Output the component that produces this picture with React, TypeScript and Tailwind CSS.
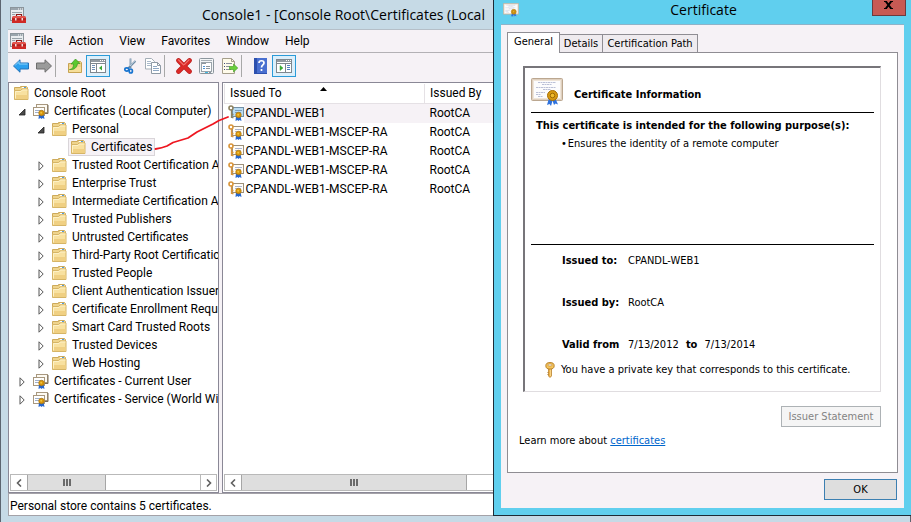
import type { ReactNode } from 'react';

type TreeNode = {
    label: string;
    level: number;
    icon: 'folder' | 'store';
    state?: 'open' | 'closed';
    selected?: boolean;
};

const treeNodes: TreeNode[] = [
    { label: 'Console Root', level: 0, icon: 'folder' },
    { label: 'Certificates (Local Computer)', level: 1, icon: 'store', state: 'open' },
    { label: 'Personal', level: 2, icon: 'folder', state: 'open' },
    { label: 'Certificates', level: 3, icon: 'folder', selected: true },
    { label: 'Trusted Root Certification A', level: 2, icon: 'folder', state: 'closed' },
    { label: 'Enterprise Trust', level: 2, icon: 'folder', state: 'closed' },
    { label: 'Intermediate Certification A', level: 2, icon: 'folder', state: 'closed' },
    { label: 'Trusted Publishers', level: 2, icon: 'folder', state: 'closed' },
    { label: 'Untrusted Certificates', level: 2, icon: 'folder', state: 'closed' },
    { label: 'Third-Party Root Certificatic', level: 2, icon: 'folder', state: 'closed' },
    { label: 'Trusted People', level: 2, icon: 'folder', state: 'closed' },
    { label: 'Client Authentication Issuer', level: 2, icon: 'folder', state: 'closed' },
    { label: 'Certificate Enrollment Requ', level: 2, icon: 'folder', state: 'closed' },
    { label: 'Smart Card Trusted Roots', level: 2, icon: 'folder', state: 'closed' },
    { label: 'Trusted Devices', level: 2, icon: 'folder', state: 'closed' },
    { label: 'Web Hosting', level: 2, icon: 'folder', state: 'closed' },
    { label: 'Certificates - Current User', level: 1, icon: 'store', state: 'closed' },
    { label: 'Certificates - Service (World Wi', level: 1, icon: 'store', state: 'closed' },
];

const certificates = [
    { to: 'CPANDL-WEB1', by: 'RootCA', selected: true },
    { to: 'CPANDL-WEB1-MSCEP-RA', by: 'RootCA', selected: false },
    { to: 'CPANDL-WEB1-MSCEP-RA', by: 'RootCA', selected: false },
    { to: 'CPANDL-WEB1-MSCEP-RA', by: 'RootCA', selected: false },
    { to: 'CPANDL-WEB1-MSCEP-RA', by: 'RootCA', selected: false },
];

const menus = ['File', 'Action', 'View', 'Favorites', 'Window', 'Help'];

const levelPadding = ['pl-[5px]', 'pl-[9px]', 'pl-[28px]', 'pl-[59px]'];

/* Icons */

function ConsoleIcon() {
    return (
        <svg width="16" height="16" viewBox="0 0 16 16" aria-hidden="true">
            <rect x="0.5" y="0.5" width="13" height="13" fill="#e9edf0" stroke="#8b959c" />
            <rect x="1" y="1" width="12" height="2" fill="#9aa5ad" />
            <path d="M8 2h1M10 2h1M12 2h1" stroke="#fff" />
            <path d="M2 5.5h10M2 7.5h3" stroke="#98a3aa" />
            <path d="M6.5 9V7.5h5V9" fill="none" stroke="#8c1a18" strokeWidth="1.2" />
            <path d="M3 9h12l1 2v5H2v-5z" fill="#cf2a26" />
            <path d="M3 9h12l1 2.5H2z" fill="#e4534c" />
            <path d="M2 12h14" stroke="#9c1614" />
            <path d="M5 11h1.5v2.500H5zM11.500 11H13v2.500h-1.500z" fill="#f3dada" />
        </svg>
    );
}

function FolderIcon() {
    return (
        <svg width="15" height="14" viewBox="0 0 15 14" className="shrink-0" aria-hidden="true">
            <path d="M0.500 1.500h6v-1h6l1 1v11.500h-13z" fill="#efd48c" stroke="#cdaa5b" />
            <rect x="8" y="1" width="4" height="1" fill="#fff" />
            <rect x="10" y="1" width="2" height="1" fill="#4f9be0" />
            <path d="M0.500 4.500h6l1.500-1.500h6v10.500H0.500z" fill="#f8e1a0" stroke="#d6b566" />
            <path d="M1 9h12.500v4H1z" fill="#f0d083" />
            <path d="M1.500 12.500V5.500h5.500l1.500-1.500h5" fill="none" stroke="#fdf1c6" />
        </svg>
    );
}

function Ribbon({ x, y }: { x: number; y: number }) {
    return (
        <g transform={`translate(${x} ${y})`}>
            <path d="M-2.500 1h2.500v5l-1-1-2 1zM0 1h2l1 5-2-1-1 1z" fill="#2566d0" />
            <circle r="2.800" fill="#d7950c" stroke="#a96f05" strokeWidth="0.500" />
            <circle cx="-0.300" cy="-0.300" r="1" fill="#f2c53e" />
        </g>
    );
}

function StoreIcon() {
    return (
        <svg width="16" height="16" viewBox="0 0 16 16" className="shrink-0" aria-hidden="true">
            <rect x="3.500" y="1.500" width="11" height="8" fill="#fdfaf2" stroke="#a8987f" />
            <path d="M15 2v8.500H4" fill="none" stroke="#7a6c58" />
            <rect x="0.500" y="4.500" width="11" height="8" fill="#fff" stroke="#a8987f" />
            <path d="M2 7.500h8M2 9.500h4" stroke="#9fb0cc" />
            <Ribbon x={8.5} y={10} />
        </svg>
    );
}

function KeyCertIcon({ active }: { active: boolean }) {
    return (
        <svg width="16" height="16" viewBox="0 0 16 16" className="block" aria-hidden="true">
            <rect x="4.500" y="2.500" width="11" height="9" fill={active ? '#b9dcf3' : '#fffdf8'} stroke={active ? '#728fa5' : '#9d9079'} />
            <path d="M7 5.500h7M7 7.500h6" stroke={active ? '#789cc0' : '#a9b4d2'} />
            <circle cx="3" cy="3" r="2" fill="#fff" stroke={active ? '#8d8260' : '#d9953a'} strokeWidth="1.600" />
            <path d="M3.500 5v8M4 9.500h1.500M4 12.500h1.500" fill="none" stroke={active ? '#8d8260' : '#d9953a'} strokeWidth="1.300" />
            <Ribbon x={10.5} y={10} />
        </svg>
    );
}

function CertificateIcon({ className }: { className: string }) {
    return (
        <svg viewBox="0 0 32 28" className={className} aria-hidden="true">
            <rect x="0.500" y="0.500" width="31" height="22" rx="1" fill="#dfd0bf" stroke="#bba790" />
            <rect x="2.500" y="2.500" width="27" height="18" fill="#fcfcfd" stroke="#efe5d9" />
            <path d="M7 4.500h18M11 6.500h10M5 9.500h20M12 11.500h8M5 14.500h9M5 16.500h5M7 18.500h5" stroke="#aab0cc" strokeDasharray="2 0.500" strokeWidth="0.800" />
            <path d="M18 20l-2 7 2.500-1 1.500 2 2-7zM21 21l2 6 1.500-1.500 2.500 1-3-7z" fill="#2e72de" />
            <circle cx="21.500" cy="17.500" r="5" fill="#d79a12" stroke="#a96f05" />
            <circle cx="21.500" cy="17.500" r="2.300" fill="#f0bc2d" stroke="#9c6907" />
        </svg>
    );
}

function KeyIcon() {
    return (
        <svg width="10" height="16" viewBox="0 0 10 16" className="shrink-0" aria-hidden="true">
            <path d="M3.500 6.500h3v7.500L5 15.500 3.500 14z" fill="#eeb24a" stroke="#b27a24" strokeWidth="0.700" />
            <path d="M5.500 7v7" stroke="#fbdc92" strokeWidth="0.800" />
            <path d="M3.500 10.500h-1M3.500 12.500h-1" stroke="#b27a24" />
            <ellipse cx="5" cy="3.800" rx="4.200" ry="3.300" fill="#f4c35a" stroke="#b27a24" strokeWidth="0.900" />
            <ellipse cx="5" cy="3" rx="2.200" ry="1" fill="#fff" stroke="#b27a24" strokeWidth="0.600" />
        </svg>
    );
}

function ArrowIcon({ forward = false }: { forward?: boolean }) {
    return (
        <svg width="16" height="14" viewBox="0 0 16 14" aria-hidden="true">
            {forward ? (
                <path d="M15.500 7L9 0.800V4H0.500v6H9v3.200z" fill="#9b9b9b" stroke="#6e6e6e" />
            ) : (
                <>
                    <path d="M0.500 7L7 0.800V4h8.500v6H7v3.200z" fill="#2ba0ef" stroke="#2171b8" />
                    <path d="M2 6.500L6 2.500V5h8.500" fill="none" stroke="#8dd2fb" />
                </>
            )}
        </svg>
    );
}

function UpFolderIcon() {
    return (
        <svg width="16" height="16" viewBox="0 0 16 16" aria-hidden="true">
            <path d="M1.500 5.500h6v-2h6l1 1v10h-13z" fill="#efd48c" stroke="#c7a352" />
            <path d="M2 9h12v5H2z" fill="#f6de9a" />
            <path d="M2.500 11.500c3.500-0.500 4-3 4-5.500H4l4.500-5L13 5.500h-2.500c-0.500 4-3 6.500-8 6z" fill="#5cc92e" stroke="#379620" strokeWidth="0.700" />
        </svg>
    );
}

function PaneIcon({ side }: { side: 'left' | 'right' }) {
    return (
        <svg width="16" height="14" viewBox="0 0 16 14" aria-hidden="true">
            <rect x="0.500" y="0.500" width="15" height="13" fill="#fff" stroke="#7f878e" />
            <rect x="1" y="1" width="14" height="2" fill="#929aa1" />
            <path d="M10 1.500h1M12 1.500h1M14 1.500h1" stroke="#fff" />
            <path d="M1 4.500h14" stroke="#7f878e" />
            {side === 'left' ? (
                <>
                    <path d="M6.500 5v8" stroke="#7f878e" />
                    <path d="M2 6.500h3M2 8.500h3M2 10.500h3" stroke="#6f8fb5" />
                    <path d="M12 6.500v5L9 9z" fill="#3aa935" />
                </>
            ) : (
                <>
                    <path d="M9.500 5v8" stroke="#7f878e" />
                    <path d="M11 6.500h3M11 8.500h3M11 10.500h3" stroke="#4f7fc0" />
                    <path d="M4 6.500v5L7 9z" fill="#3aa935" stroke="#3aa935" strokeWidth="0.500" />
                </>
            )}
        </svg>
    );
}

function CutIcon() {
    return (
        <svg width="14" height="16" viewBox="0 0 14 16" aria-hidden="true">
            <path d="M7.500 0.500L7.500 10M12.500 3L5 10.500" fill="none" stroke="#6e8ba5" strokeWidth="1.800" />
            <path d="M7.800 1v7M12 3L7 8" stroke="#d4e3ef" strokeWidth="0.600" />
            <ellipse cx="3.800" cy="11.500" rx="2" ry="1.600" fill="none" stroke="#1874cf" strokeWidth="1.700" />
            <ellipse cx="7.800" cy="13" rx="1.600" ry="2" fill="none" stroke="#1874cf" strokeWidth="1.700" />
        </svg>
    );
}

function CopyIcon() {
    return (
        <svg width="16" height="16" viewBox="0 0 16 16" aria-hidden="true">
            <path d="M0.500 0.500h6l3 3v7.500h-9z" fill="#fff" stroke="#a3adb6" />
            <path d="M2 3.500h4M2 5.500h4M2 7.500h4" stroke="#a9b9cb" />
            <path d="M6.500 4.500h6l3 3v8h-9z" fill="#fff" stroke="#8f9aa5" />
            <path d="M12.500 4.500v3h3" fill="none" stroke="#8f9aa5" />
            <path d="M8 8.500h4M8 10.500h6M8 12.500h6" stroke="#8fa8c4" />
        </svg>
    );
}

function DeleteIcon() {
    return (
        <svg width="16" height="16" viewBox="0 0 16 16" aria-hidden="true">
            <path d="M2.500 2.500l11 11M13.500 2.500l-11 11" stroke="#b81a18" strokeWidth="4.600" strokeLinecap="round" />
            <path d="M2.500 2.500l11 11M13.500 2.500l-11 11" stroke="#dc2a28" strokeWidth="3.400" strokeLinecap="round" />
            <path d="M2.500 1.800l5 5M13 1.800L8.500 6.300" stroke="#f27570" strokeWidth="1.200" strokeLinecap="round" />
        </svg>
    );
}

function PropertiesIcon() {
    return (
        <svg width="15" height="16" viewBox="0 0 15 16" aria-hidden="true">
            <rect x="0.500" y="0.500" width="14" height="15" rx="1" fill="#f3f5f6" stroke="#8d969d" />
            <path d="M2 2.500h11" stroke="#a8b0b6" />
            <rect x="2.500" y="4.500" width="10" height="9" fill="#fff" stroke="#9ba4ab" />
            <path d="M3 5.500h4" stroke="#8d969d" />
            <path d="M4 8.500h2M4 10.500h2" stroke="#4c94d6" />
            <path d="M7 8.500h4M7 10.500h4M10 14.500h2" stroke="#8d969d" />
            <path d="M6 14.500h3" stroke="#42b8e0" />
        </svg>
    );
}

function ExportIcon() {
    return (
        <svg width="16" height="16" viewBox="0 0 16 16" aria-hidden="true">
            <path d="M0.500 0.500h9l3 3v12h-12z" fill="#fffbea" stroke="#a59e8b" />
            <path d="M9.500 0.500v3h3" fill="none" stroke="#a59e8b" />
            <path d="M2 5.500h1M2 8.500h1M2 11.500h1" stroke="#404a7d" />
            <path d="M4 5.500h6M4 8.500h4M4 11.500h5" stroke="#8b8f9d" />
            <path d="M7.500 8.500h4v-2.500l4.300 4-4.300 4V11.500h-4z" fill="#69cf3b" stroke="#3d9b21" strokeWidth="0.600" />
        </svg>
    );
}

function HelpIcon() {
    return (
        <svg width="13" height="16" viewBox="0 0 13 16" aria-hidden="true">
            <rect width="13" height="16" fill="#2d50ae" />
            <rect x="3" width="10" height="15" fill="#496fd0" />
            <path d="M5 5c0-3 5-3 5 0 0 2-2.500 2-2.500 4.500M7.500 11v2" fill="none" stroke="#fff" strokeWidth="1.700" />
        </svg>
    );
}

function Expander({ state, label }: { state: 'open' | 'closed'; label: string }) {
    return (
        <button type="button" aria-label={`Toggle ${label}`} className="w-3 shrink-0 mr-[3px]">
            <svg width="8" height="10" viewBox="0 0 8 10" className="mt-0.5" aria-hidden="true">
                {state === 'open' ? (
                    <path d="M7 2v6H1z" fill="#4a4a4a" stroke="#222" strokeWidth="0.800" />
                ) : (
                    <path d="M2 0.800v8.400L6.200 5z" fill="#fff" stroke="#555" />
                )}
            </svg>
        </button>
    );
}

/* Console window */

function ToolButton({ label, pressed, children }: { label: string; pressed?: boolean; children: ReactNode }) {
    return (
        <button
            type="button"
            aria-label={label}
            className={`flex items-center justify-center h-[22px] ${pressed ? 'w-6 border border-[#2b9bd8] bg-[#dceffb]' : 'w-[23px]'}`}
        >
            {children}
        </button>
    );
}

function ToolSeparator() {
    return <div className="w-px h-[22px] mr-[7px] bg-[#a8a8a8]" />;
}

function ScrollBar({ thumb, end }: { thumb: string; end: boolean }) {
    const arrow = 'w-4 shrink-0 flex items-center justify-center';
    return (
        <div className="flex h-[17px] m-px border border-[#b9b9b9] bg-white">
            <button type="button" aria-label="Scroll left" className={arrow}>
                <svg width="6" height="8" viewBox="0 0 6 8" aria-hidden="true">
                    <path d="M5 0.500L1.500 4 5 7.500" fill="none" stroke="#606060" strokeWidth="1.600" />
                </svg>
            </button>
            <div className={`flex items-center justify-center gap-px bg-[#dedede] border-x border-[#a6a6a6] ${thumb}`}>
                <span className="w-0.5 h-[7px] bg-[#6a6a6a]" />
                <span className="w-0.5 h-[7px] bg-[#6a6a6a]" />
                <span className="w-0.5 h-[7px] bg-[#6a6a6a]" />
            </div>
            {end && (
                <button type="button" aria-label="Scroll right" className={`${arrow} ml-auto border-l border-[#b9b9b9]`}>
                    <svg width="6" height="8" viewBox="0 0 6 8" aria-hidden="true">
                        <path d="M1 0.500L4.500 4 1 7.500" fill="none" stroke="#606060" strokeWidth="1.600" />
                    </svg>
                </button>
            )}
        </div>
    );
}

function ConsoleTree() {
    return (
        <div className="flex flex-col w-[211px] shrink-0 bg-white border border-[#8a8896]">
            <ul className="flex-1 pt-px overflow-hidden">
                {treeNodes.map((node) => (
                    <li key={node.label} className={`flex items-center h-[18px] whitespace-nowrap ${levelPadding[node.level]}`}>
                        {node.state && <Expander state={node.state} label={node.label} />}
                        <span className={`flex items-center gap-[5px] h-[18px] ${node.selected ? 'bg-[#f6f2f6] border border-[#d9d5d9] pl-0.5 pr-0.5' : ''}`}>
                            {node.icon === 'folder' ? <FolderIcon /> : <StoreIcon />}
                            {node.label}
                        </span>
                    </li>
                ))}
            </ul>
            <ScrollBar thumb="w-[79px]" end />
        </div>
    );
}

function CertificateList() {
    return (
        <div className="flex flex-col flex-1 bg-white border border-[#8a8896]">
            <div className="flex-1 pl-px pt-px">
                <table className="w-full table-fixed border-collapse text-left">
                    <thead>
                        <tr className="h-[19px] border-b border-[#e5e1e5]">
                            <th className="relative w-[200px] p-0 pl-[5px] font-normal border-x border-[#e5e1e5]">
                                Issued To
                                <svg width="7" height="4" viewBox="0 0 7 4" className="absolute left-[95px] top-[3px]" aria-hidden="true">
                                    <path d="M3.500 0L7 4H0z" fill="#000" />
                                </svg>
                            </th>
                            <th className="p-0 pl-[5px] font-normal">Issued By</th>
                        </tr>
                    </thead>
                    <tbody>
                        {certificates.map((cert, index) => (
                            <tr key={index} className="h-[19px]">
                                <td className="p-0">
                                    <div className="flex items-center h-[19px] pl-[3px]">
                                        <KeyCertIcon active={cert.selected} />
                                        <span className={`flex-1 pl-0.5 h-[19px] leading-[19px] ${cert.selected ? 'bg-[#f6f2f6]' : ''}`}>{cert.to}</span>
                                    </div>
                                </td>
                                <td className={`p-0 pl-[5px] leading-[19px] ${cert.selected ? 'bg-[#f6f2f6]' : ''}`}>{cert.by}</td>
                            </tr>
                        ))}
                    </tbody>
                </table>
            </div>
            <ScrollBar thumb="w-[226px]" end={false} />
        </div>
    );
}

function ConsoleWindow() {
    return (
        <div className="flex flex-col flex-1 bg-[#c6dae6] border-x border-[#5c6570] pl-[7px] pr-[7px] pb-1.5 text-[12px] leading-[18px] font-['Roboto','Open_Sans',sans-serif]">
            <header className="flex items-center h-[29px]">
                <span className="ml-0.5 w-[192px]">
                    <ConsoleIcon />
                </span>
                <h1 className="text-[14px] whitespace-pre font-['Open_Sans','Noto_Sans',sans-serif]">Console1 - [Console Root\Certificates (Local</h1>
            </header>

            <div className="flex flex-col flex-1 bg-[#f6f2f6] border-t border-[#b5bfc8]">
                <nav className="flex items-center h-[23px] pl-0.5 border-b border-[#b3b1b5]">
                    <ConsoleIcon />
                    <div className="flex gap-4 pl-2">
                        {menus.map((menu) => (
                            <button key={menu} type="button">
                                {menu}
                            </button>
                        ))}
                    </div>
                </nav>

                <div className="flex items-center h-[29px] pl-px pb-1">
                    <ToolButton label="Back"><ArrowIcon /></ToolButton>
                    <ToolButton label="Forward"><ArrowIcon forward /></ToolButton>
                    <ToolSeparator />
                    <ToolButton label="Up one level"><UpFolderIcon /></ToolButton>
                    <ToolButton label="Show or hide console tree" pressed><PaneIcon side="left" /></ToolButton>
                    <span className="w-2" />
                    <ToolButton label="Cut"><CutIcon /></ToolButton>
                    <ToolButton label="Copy"><CopyIcon /></ToolButton>
                    <ToolSeparator />
                    <ToolButton label="Delete"><DeleteIcon /></ToolButton>
                    <ToolButton label="Properties"><PropertiesIcon /></ToolButton>
                    <ToolButton label="Export list"><ExportIcon /></ToolButton>
                    <ToolSeparator />
                    <ToolButton label="Help"><HelpIcon /></ToolButton>
                    <ToolButton label="Show or hide action pane" pressed><PaneIcon side="right" /></ToolButton>
                </div>

                <main className="relative flex flex-1 gap-[3px]">
                    <ConsoleTree />
                    <CertificateList />
                    {/* Marker line from the folder to the certificate */}
                    <svg width="78" height="38" viewBox="0 0 78 38" className="absolute left-[145px] top-8" aria-hidden="true">
                        <path d="M2.500 35Q9 34 14 32L20 28.500L35 24L44 18L60 10L66 6.500L75 3" fill="none" stroke="#ee1620" strokeWidth="1.800" strokeLinecap="round" strokeLinejoin="round" />
                    </svg>
                </main>

                <footer className="h-[23px] pl-px pt-[3px] bg-white border border-[#a4a2a8]">Personal store contains 5 certificates.</footer>
            </div>
        </div>
    );
}

/* Certificate dialog */

function Field({ label, children }: { label: string; children: ReactNode }) {
    return (
        <div className="flex">
            <dt className="w-[66px] font-bold whitespace-nowrap">{label}</dt>
            <dd className="whitespace-nowrap">{children}</dd>
        </div>
    );
}

function CertificateDialog() {
    return (
        <section
            role="dialog"
            aria-labelledby="dialog-title"
            className="absolute left-[493px] right-0 top-0 bg-[#60cfee] border-l border-b border-[#1d2b36] pl-[7px] pr-[7px] pb-[7px] text-[11px] leading-[18px] font-['DejaVu_Sans_Condensed','DejaVu_Sans',sans-serif]"
        >
            <header className="flex items-start justify-between h-6">
                <CertificateIcon className="w-4 h-3.5 ml-0.5 mt-[3px]" />
                <h2 id="dialog-title" className="text-[14px] leading-5 pl-4 font-['Open_Sans','Noto_Sans',sans-serif]">Certificate</h2>
                <button type="button" aria-label="Close" className="flex justify-center w-[34px] h-4 pt-px -mr-0.5 bg-[#c75a54] border border-t-0 border-[#6d3a3d]">
                    <svg width="9" height="8" viewBox="0 0 9 8" aria-hidden="true">
                        <path d="M1.500 0l6 8M7.500 0l-6 8" stroke="#000" strokeWidth="2" />
                        <path d="M0 0.500h3M6 0.500h3M0 7.500h3M6 7.500h3" stroke="#000" />
                    </svg>
                </button>
            </header>

            <div className="bg-[#f6f2f6] border-t border-[#8fb3c8] px-1.5 pt-[7px] pb-2">
                <div role="tablist" className="flex items-end h-5 whitespace-nowrap">
                    <button type="button" role="tab" aria-selected="true" className="relative h-[21px] w-[53px] -mb-px pb-0.5 bg-white border border-b-0 border-[#8f8d93]">
                        General
                    </button>
                    <button type="button" role="tab" aria-selected="false" className="h-[18px] w-[43px] bg-[#efebef] border border-b-0 border-l-0 border-[#8f8d93]">
                        Details
                    </button>
                    <button type="button" role="tab" aria-selected="false" className="h-[18px] w-[95px] bg-[#efebef] border border-b-0 border-l-0 border-[#8f8d93]">
                        Certification Path
                    </button>
                </div>

                <div role="tabpanel" className="bg-white border border-[#8f8d93] pl-[15px] pr-4 pt-[13px] pb-[22px]">
                    <div className="border-t-2 border-l-2 border-r border-b border-t-[#77757a] border-l-[#77757a] border-r-[#e0dde0] border-b-[#e0dde0] pl-1.5 pr-1.5 pt-2.5 pb-3">
                        <div className="flex items-center h-[34px] gap-[11px]">
                            <CertificateIcon className="w-8 h-7 self-start" />
                            <h3 className="font-bold">Certificate Information</h3>
                        </div>
                        <div className="h-[133px] pt-1 pl-[5px] border-y border-black">
                            <p className="font-bold whitespace-nowrap">This certificate is intended for the following purpose(s):</p>
                            <ul className="pl-[25px]">
                                <li className="flex gap-px"><span>•</span>Ensures the identity of a remote computer</li>
                            </ul>
                        </div>
                        <dl className="flex flex-col gap-6 pl-[31px] pt-[7px]">
                            <Field label="Issued to:">CPANDL-WEB1</Field>
                            <Field label="Issued by:">RootCA</Field>
                            <Field label="Valid from">
                                7/13/2012 <b className="px-1">to</b> 7/13/2014
                            </Field>
                        </dl>
                        <p className="flex items-center gap-1.5 pl-3.5 pt-[7px] whitespace-nowrap">
                            <KeyIcon />
                            You have a private key that corresponds to this certificate.
                        </p>
                    </div>
                    <div className="flex justify-end pt-3.5">
                        <button type="button" disabled className="h-[21px] w-[100px] bg-[#f5f5f5] border border-[#adb2b5] text-[#838383]">
                            Issuer Statement
                        </button>
                    </div>
                    <p className="-ml-1 pt-[5px]">
                        Learn more about <a href="#certificates" className="text-[#0066cc] underline">certificates</a>
                    </p>
                </div>

                <div className="flex justify-end pt-1.5 pr-px">
                    <button type="button" className="h-[21px] w-[73px] bg-[#dedede] border border-[#3c7fb1]">
                        OK
                    </button>
                </div>
            </div>
        </section>
    );
}

export default function App() {
    return (
        <div className="relative flex flex-col min-h-screen overflow-hidden text-black">
            <ConsoleWindow />
            <CertificateDialog />
        </div>
    );
}
